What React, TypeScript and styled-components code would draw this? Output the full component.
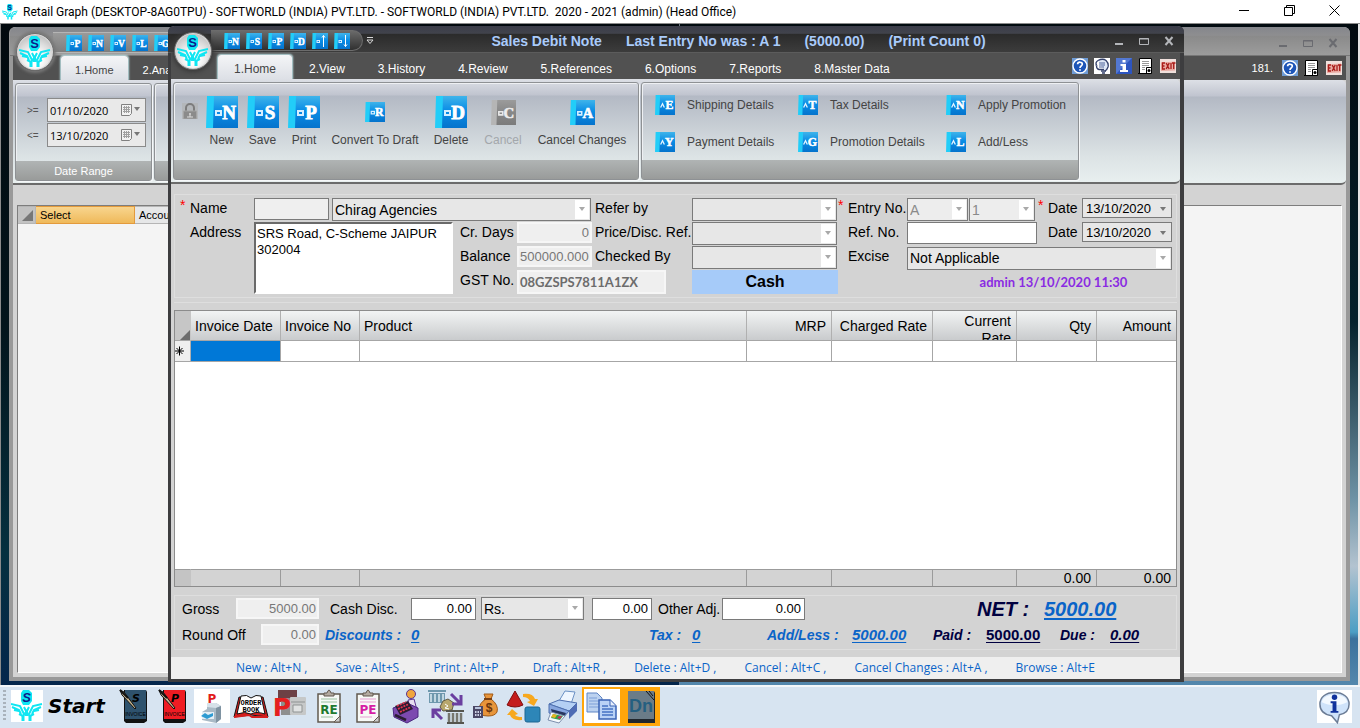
import React, { useId } from "react";
import styled, { createGlobalStyle, css } from "styled-components";

const SANS = '"Liberation Sans", Arial, sans-serif';
const UI = '"Open Sans", "Noto Sans", sans-serif';

const GlobalStyle = createGlobalStyle`
  *, *::before, *::after { box-sizing: border-box; }
  body { margin: 0; font-family: ${SANS}; color: #000; }
  button, input, select, textarea { font-family: inherit; margin: 0; border-radius: 0; }
  button { cursor: pointer; }
`;

/* ---------- page frame ---------- */

const Page = styled.div`
  display: flex;
  flex-direction: column;
  min-height: 100vh;
  background: #d7e4f1;
`;

const AppTitle = styled.header`
  display: flex;
  align-items: center;
  height: 24px;
  background: #fff;
  border-bottom: 1px solid #8a8a8a;
  padding: 0 3px 0 2px;
  font: 12px/22px Roboto, sans-serif;
  white-space: pre;
`;

const AppName = styled.h1`
  margin: 0 auto 0 5px;
  font: inherit;
`;

const SystemButton = styled.button`
  width: 45px;
  height: 22px;
  padding: 0 0 2px;
  border: 0;
  background: none;
  display: grid;
  place-items: center;
`;

const Desktop = styled.main`
  position: relative;
  flex: 1;
  min-height: 560px;
  overflow: hidden;
  border-left: 1px solid #8a8a8a;
  border-right: 2px solid #e4e4e4;
  background:
    linear-gradient(#020b10, #04222c 45%, #6f93a6 72%, #b3c3d0 82%, #4c9ec4 92%, #3b719c 93%, #5488ad) right / 50% 100% no-repeat,
    linear-gradient(#02090e, #03141b 45%, #05303f 80%, #04264c) left / 50% 100% no-repeat;
`;

const Taskbar = styled.footer`
  display: flex;
  align-items: center;
  height: 43px;
  padding: 0 8px 3px 3px;
  background: #d7e4f1;
  border-top: 2px solid #f4f7fa;
`;

/* ---------- child windows ---------- */

const Child = styled.section<{ $back?: boolean }>`
  position: absolute;
  display: flex;
  flex-direction: column;
  border-style: solid;
  border-radius: 6px 6px 0 0;
  background: #d3d3d3;
  ${(p) =>
    p.$back
      ? css`
          inset: 3px 8px 4px 8px;
          border-width: 0 4px 4px;
          border-color: #999;
        `
      : css`
          inset: 2px 174px 3px 167px;
          border-width: 0 4px 3px 3px;
          border-color: #3d3d3f;
        `}
`;

const ChildTitle = styled.header<{ $back?: boolean }>`
  display: flex;
  align-items: center;
  height: ${(p) => (p.$back ? 29 : 27)}px;
  margin: 0 -4px 0 -3px;
  padding: 3px ${(p) => (p.$back ? 12 : 10)}px 0 43px;
  border-radius: 6px 6px 0 0;
  border-bottom: 1px solid ${(p) => (p.$back ? "#777" : "#5c5c5c")};
  background: ${(p) =>
    p.$back
      ? "linear-gradient(#84868c, #8e8e90 30%, #8a8a8a 32%, #9c9c9c)"
      : "linear-gradient(#3b3d49, #41434c 28%, #2b2b2b 32%, #3c3c3c)"};
`;

const QuickBar = styled.nav<{ $back?: boolean }>`
  display: flex;
  gap: 6px;
  height: 21px;
  align-items: center;
  padding: 0 12px 0 13px;
  border-radius: 0 11px 11px 0;
  border: 1px solid ${(p) => (p.$back ? "#b5b5b5" : "#6c6c6c")};
  border-left: 0;
  background: ${(p) => (p.$back ? "linear-gradient(#9a9a9a, #7e7e7e)" : "linear-gradient(#6a6a6a, #303030)")};
`;

const IconButton = styled.button`
  display: block;
  padding: 0;
  border: 0;
  background: none;
  line-height: 0;
`;

const Caption = styled.h2`
  flex: 1;
  display: flex;
  justify-content: center;
  gap: 24px;
  margin: 0;
  padding-right: 14px;
  font: bold 14px/20px ${SANS};
  color: #a9cbfb;
  white-space: nowrap;
`;

const WindowControls = styled.div`
  display: flex;
  gap: 15px;
  margin-left: auto;
`;

const TabBar = styled.nav<{ $back?: boolean }>`
  display: flex;
  align-items: flex-end;
  gap: 1px;
  height: ${(p) => (p.$back ? 24 : 26)}px;
  padding: 0 4px 0 ${(p) => (p.$back ? 48 : 47)}px;
  background: #515151;
`;

const Tab = styled.button<{ $active?: boolean; $small?: boolean }>`
  height: 24px;
  padding: ${(p) => (p.$small ? "2px 14px 0" : "2px 16px 0")};
  border: 0;
  font-size: ${(p) => (p.$small ? 11 : 12)}px;
  line-height: 24px;
  white-space: nowrap;
  color: #fff;
  background: none;
  ${(p) =>
    p.$active &&
    css`
      color: #444;
      border-radius: 3px 3px 0 0;
      background: linear-gradient(#f4f5f7, #dde0e6);
      box-shadow: 0 0 2px 1px #bfe4e8;
    `}
`;

const TabTools = styled.div`
  display: flex;
  align-items: center;
  gap: 6px;
  height: 100%;
  margin-left: auto;
  font-size: 11px;
  color: #fff;
`;

const Ribbon = styled.div`
  position: relative;
  display: flex;
  gap: 2px;
  height: 105px;
  padding: 3px 2px 2px;
  border-radius: 0 5px 5px 0;
  border-bottom: 2px solid #6b6b6b;
  background: linear-gradient(#dde0e6, #c0c4cf 16px, #b3b9c4 17px, #dce3e5 75%, #e8efef);
`;

const Group = styled.section<{ $width: number }>`
  display: flex;
  flex-direction: column;
  width: ${(p) => p.$width}px;
  border: 1px solid #8e9194;
  border-radius: 3px;
  box-shadow: 1px 1px 0 #f6f8f9, inset 1px 1px 0 #eef0f3;
`;

const GroupBody = styled.div`
  flex: 1;
  display: flex;
`;

const GroupCaption = styled.div`
  height: 19px;
  background: linear-gradient(#b0b4b4, #999b9a);
  color: #fff;
  font-size: 11px;
  line-height: 20px;
  text-align: center;
`;

const Command = styled.button<{ $width: number }>`
  width: ${(p) => p.$width}px;
  display: flex;
  flex-direction: column;
  align-items: center;
  padding: 12px 0 0;
  border: 0;
  background: none;
  font-size: 12px;
  line-height: 16px;
  color: #444;
  white-space: nowrap;
  &:disabled { color: #a3a7ab; }
`;

const CommandIcon = styled.span`
  display: grid;
  place-items: center;
  height: 34px;
  margin-bottom: 3px;
`;

const LockSlot = styled.div`
  width: 27px;
  padding: 20px 0 0 8px;
`;

const DetailGrid = styled.div`
  display: grid;
  grid-template-columns: 143px 148px 1fr;
  grid-auto-rows: 37px;
  padding: 3px 0 0 13px;
`;

const Detail = styled.button`
  display: flex;
  align-items: center;
  gap: 12px;
  padding: 0;
  border: 0;
  background: none;
  font-size: 12px;
  color: #444;
  white-space: nowrap;
`;

/* ---------- form parts ---------- */

const Workspace = styled.div`
  flex: 1;
  display: flex;
  flex-direction: column;
  padding: 10px 3px 7px;
`;

const HeaderForm = styled.form`
  display: grid;
  grid-template-columns: 74px 78px minmax(128px, 1fr) 57px 78px 97px 146px 69px 62px 71px 42px 90px;
  grid-template-rows: repeat(4, 24px);
  padding: 3px 5px;
  border: 1px solid #dedede;
`;

const Area = styled.div<{ $col: string; $row: string; $right?: number; $align?: string }>`
  grid-column: ${(p) => p.$col};
  grid-row: ${(p) => p.$row};
  display: flex;
  min-width: 0;
  align-items: ${(p) => p.$align ?? "flex-start"};
  padding-right: ${(p) => p.$right ?? 0}px;
`;

const Label = styled.label<{ $required?: boolean }>`
  position: relative;
  font-size: 14px;
  line-height: 20px;
  white-space: nowrap;
  ${(p) =>
    p.$required &&
    css`
      &::before {
        content: "*";
        position: absolute;
        left: -10px;
        top: -3px;
        color: #f00;
      }
    `}
`;

const LabelArea = styled(Area)`
  padding-left: ${(p) => p.$right ?? 0}px;
  padding-right: 0;
`;

const fieldBase = css`
  width: 100%;
  height: 22px;
  padding: 0 3px;
  font-size: 13px;
  border: 1px solid #7a7a7a;
  outline: 0;
`;

const Field = styled.input<{ $kind?: "plain" | "muted"; $right?: boolean }>`
  ${fieldBase}
  background: #fff;
  text-align: ${(p) => (p.$right ? "right" : "left")};
  ${(p) =>
    p.$kind === "muted" &&
    css`
      height: 21px;
      padding: 0 1px;
      background: #efefef;
      border: 2px solid #f6f6f6;
      color: #777;
    `}
`;

const NameCode = styled(Field)`
  background: #efefef;
`;

const TaxNumber = styled(Field)`
  height: 24px;
  font: bold 13px Lato, sans-serif;
  color: #6c6c6c;
`;

const AddressBox = styled.textarea`
  width: 100%;
  height: 72px;
  padding: 2px 1px;
  font-size: 13px;
  line-height: 16px;
  resize: none;
  border: 2px solid #fff;
  border-top-color: #6a6a6a;
  border-left-color: #6a6a6a;
  background: #fff;
  outline: 0;
`;

const Drop = styled.span<{ $solid?: boolean }>`
  position: relative;
  display: block;
  width: 100%;
  &::before {
    content: "";
    position: absolute;
    right: 2px;
    top: 2px;
    bottom: 2px;
    width: 14px;
    background: ${(p) => (p.$solid ? "none" : "#fff")};
    pointer-events: none;
  }
  &::after {
    content: "";
    position: absolute;
    right: 6px;
    top: 9px;
    border: 3px solid transparent;
    border-top: 4px solid ${(p) => (p.$solid ? "#777" : "#a9a9a9")};
    border-bottom: 0;
    pointer-events: none;
  }
`;

const Select = styled.select`
  ${fieldBase}
  display: block;
  height: 23px;
  padding: 0 2px;
  font-size: 14px;
  appearance: none;
  background: #e7e7e7;
  color: #000;
  opacity: 1;
  &:disabled { background: #ededed; color: #8a8a8a; }
`;

const DateInput = styled.input`
  ${fieldBase}
  display: block;
  height: 20px;
  background: #e7e7e7;
`;

const Mode = styled.output`
  flex: 1;
  height: 24px;
  background: #a6cbf9;
  font: bold 16px/24px ${SANS};
  text-align: center;
`;

const Stamp = styled.p`
  margin: 0;
  width: 100%;
  font: bold 13px/24px Lato, sans-serif;
  color: #8a2be2;
  padding-left: 28px;
  text-align: center;
  white-space: nowrap;
`;

/* ---------- line items ---------- */

const Sheet = styled.div`
  flex: 1;
  display: grid;
  margin-top: 4px;
  padding: 7px 0 0;
  border-top: 1px solid #dedede;
`;

const Lines = styled.table`
  width: 100%;
  height: 100%;
  min-height: 200px;
  table-layout: fixed;
  border-spacing: 0;
  border: 1px solid #8c8c8c;
  background: #fff;
  font-size: 14px;
  tr > :last-child { border-right: 0; }
`;

const HeadCell = styled.th<{ $right?: boolean }>`
  height: 30px;
  padding: 0 5px 0 4px;
  font-weight: normal;
  text-align: ${(p) => (p.$right ? "right" : "left")};
  white-space: nowrap;
  border-right: 1px solid #b0b0b0;
  border-bottom: 1px solid #a6a6a6;
  background: linear-gradient(#f2f4f4, #c9cbcd);
`;

const TwoLine = styled.div`
  height: 28px;
  padding-top: 1px;
  line-height: 17px;
  overflow: hidden;
  white-space: normal;
`;

const Corner = styled.th`
  padding: 0;
  vertical-align: bottom;
  background: #c6c6c6;
  border-bottom: 1px solid #a6a6a6;
  border-right: 1px solid #c6c6c6;
  &::after {
    content: "";
    display: block;
    margin-left: auto;
    width: 0;
    border-left: 10px solid transparent;
    border-bottom: 10px solid #6d6d6d;
  }
`;

const RowMark = styled.th`
  height: 21px;
  padding: 0;
  background: #efefef;
  border-right: 1px solid #b0b0b0;
  border-bottom: 1px solid #a6a6a6;
  text-align: left;
  svg { display: block; }
`;

const Cell = styled.td<{ $active?: boolean }>`
  height: 21px;
  padding: 0;
  border-right: 1px solid #a6a6a6;
  border-bottom: 1px solid #a6a6a6;
  background: ${(p) => (p.$active ? "#0078d7" : "#fff")};
`;

const FootCell = styled.td<{ $mark?: boolean }>`
  height: 17px;
  padding: 1px 5px 0;
  line-height: 15px;
  text-align: right;
  background: ${(p) => (p.$mark ? "#c4c4c4" : "#d3d3d3")};
  border-top: 1px solid #9b9b9b;
  border-right: 1px solid ${(p) => (p.$mark ? "#c4c4c4" : "#9b9b9b")};
`;

/* ---------- totals ---------- */

const Totals = styled.section`
  display: flex;
  flex-direction: column;
  gap: 3px;
  margin-top: 8px;
  padding: 1px 5px 3px 7px;
  border: 1px solid #dedede;
`;

const TotalsRow = styled.div`
  display: flex;
  align-items: center;
  height: 23px;
`;

const Slot = styled.div<{ $w?: number; $gap?: number }>`
  ${(p) => (p.$w ? `width: ${p.$w}px;` : "flex: 1;")}
  margin-right: ${(p) => p.$gap ?? 0}px;
  white-space: nowrap;
`;

const Figure = styled.span<{ $navy?: boolean; $big?: boolean }>`
  font: italic bold ${(p) => (p.$big ? 20 : 14)}px/22px ${SANS};
  color: ${(p) => (p.$navy ? "#000040" : "#0a64c8")};
`;

const FigureLink = styled.a<{ $navy?: boolean; $big?: boolean; $upright?: boolean }>`
  font: ${(p) => (p.$upright ? "normal" : "italic")} bold ${(p) => (p.$big ? 20 : 15)}px/22px ${SANS};
  color: ${(p) => (p.$navy ? "#000040" : "#0a64c8")};
  text-decoration: underline;
  text-underline-offset: 2px;
`;

const HotKeys = styled.footer`
  display: flex;
  justify-content: center;
  gap: 28px;
  height: 22px;
  padding-right: 20px;
  background: #efefef;
  font: 12px/22px ${UI};
  color: #0a64c8;
  white-space: nowrap;
`;

/* ---------- back window parts ---------- */

const DateRange = styled.div`
  display: grid;
  grid-template-columns: 31px 99px;
  grid-auto-rows: 24px;
  gap: 1px 0;
  align-content: start;
  padding-top: 14px;
`;

const RangeLabel = styled.label`
  padding-left: 11px;
  font-size: 10px;
  line-height: 26px;
  color: #555;
`;

const RangeInput = styled.input`
  ${fieldBase}
  display: block;
  height: 24px;
  padding: 0 2px;
  font: 11px ${UI};
  background: #e9e9e9;
  border-color: #8a8a8a;
`;

const Picker = styled(Drop)`
  svg { position: absolute; right: 14px; top: 6px; }
`;

const Listing = styled.div`
  flex: 1;
  margin: 20px 4px 4px;
  border: 1px solid #7d7d7d;
  border-right-color: #fff;
  border-bottom-color: #fff;
  background: #f4f4f4;
`;

const ListTable = styled.table`
  border-spacing: 0;
  font-size: 11px;
`;

const ListHead = styled.th<{ $selected?: boolean; $w: number }>`
  width: ${(p) => p.$w}px;
  height: 18px;
  padding: 0 4px;
  font-weight: normal;
  text-align: left;
  background: ${(p) => (p.$selected ? "linear-gradient(#f8d58e, #efb95a)" : "#e6e7e8")};
  border: 1px solid ${(p) => (p.$selected ? "#e39a3c" : "#b5b5b5")};
  border-left-width: 0;
`;

const ListCorner = styled(ListHead)`
  padding: 0;
  background: #c2c2c2;
  &::after {
    content: "";
    display: block;
    margin-left: auto;
    margin-right: 2px;
    width: 0;
    border-left: 11px solid transparent;
    border-bottom: 11px solid #777;
  }
`;

/* ---------- taskbar parts ---------- */

const Grip = styled.span`
  width: 3px;
  height: 32px;
  margin-right: 5px;
  background: repeating-linear-gradient(#a9b2bc 0 2px, transparent 2px 4px);
`;

const StartButton = styled.button`
  display: flex;
  align-items: center;
  gap: 5px;
  width: 103px;
  padding: 0;
  border: 0;
  background: none;
  font: italic bold 20px/32px "DejaVu Sans", Verdana, sans-serif;
`;

const LogoTile = styled.span`
  display: block;
  width: 32px;
  height: 32px;
  background: #fff;
`;

const TaskButton = styled.button<{ $on?: boolean }>`
  display: grid;
  place-items: center;
  width: 39px;
  height: 39px;
  padding: 0;
  border: 0;
  background: ${(p) => (p.$on ? "#ffa60a" : "none")};
`;

const InfoButton = styled(TaskButton)`
  margin-left: auto;
  width: 35px;
  height: 33px;
  background: #fff;
`;

/* ---------- drawings ---------- */

function Emblem({ size }: { size: number }) {
  return (
    <svg width={size} height={size} viewBox="0 0 32 32" aria-hidden="true" style={{ display: "block" }}>
      <path d="M12 0h6l3 3v8l-3 4h-6l-2-4V3z" fill="#0fe6f2" />
      <text x="15.500" y="12" fontFamily="Liberation Sans" fontWeight="bold" fontSize="13" textAnchor="middle" fill="#0b1d8c">S</text>
      <path d="M0 14l9 2 4 8M1 17l7 3 2 4M3 20l5 1M31 14l-9 2-4 8M30 17l-7 3-2 4M28 20l-5 1" stroke="#0fe6f2" strokeWidth="2" fill="none" />
      <path d="M13 17l2.500 5 2.500-5M8 24l4 2 3-4 4 4 4-2" stroke="#0fe6f2" strokeWidth="2" fill="none" />
      <path d="M12 25v6M19 25v6M15.500 21v5" stroke="#0fe6f2" strokeWidth="3" />
    </svg>
  );
}

const OrbButton = styled.button`
  position: absolute;
  left: 3px;
  top: 6px;
  width: 38px;
  height: 38px;
  padding: 0;
  display: grid;
  place-items: center;
  border: 1px solid #6e6e6e;
  border-radius: 50%;
  background: radial-gradient(circle at 50% 70%, #fff 20%, #dcdcdc 55%, #a8a8a8);
  box-shadow: 0 0 0 1px #d9d9d9 inset, 0 0 4px 2px #3a3a3a;
  &[data-theme="light"] { box-shadow: 0 0 0 1px #d9d9d9 inset, 0 0 3px 2px #777; }
`;

function KeyIcon({ letter, size, mark = "box", gray }: { letter: string; size: number; mark?: "box" | "caret"; gray?: boolean }) {
  const id = useId();
  return (
    <svg width={size} height={size} viewBox="0 0 32 32" aria-hidden="true" style={{ display: "block" }}>
      <defs>
        <linearGradient id={id} x1="0" y1="0" x2="0" y2="1">
          <stop offset="0" stopColor={gray ? "#9b9b9b" : "#3fb4ea"} />
          <stop offset="0.45" stopColor={gray ? "#898989" : "#0a8de6"} />
          <stop offset="1" stopColor={gray ? "#7b7b7b" : "#0573cc"} />
        </linearGradient>
      </defs>
      <path d="M7 0h25v32H6z" fill={`url(#${id})`} />
      <path d="M1 0h7L7 32H0z" fill={gray ? "#b5b5b5" : "#22cdf8"} />
      {mark === "box" ? (
        <path d="M9 14h7v6H9zM11 16v2h3v-2z" fill={gray ? "#e8e8e8" : "#d7efff"} fillRule="evenodd" />
      ) : (
        <path d="M9 20l3-6 3 6" fill="none" stroke="#e6f6ff" strokeWidth="2" />
      )}
      {letter === "^" || letter === "v" ? (
        <path d={letter === "^" ? "M23 28V5M20 9l3-4 3 4" : "M23 4v23M20 23l3 4 3-4"} stroke="#fff" strokeWidth="2" fill="none" />
      ) : (
        <text
          x="23"
          y="23"
          fontFamily="Liberation Serif"
          fontWeight="bold"
          fontSize="19"
          textAnchor="middle"
          fill={gray ? "#ececec" : "#fff"}
          stroke={gray ? "#ececec" : "#fff"}
          strokeWidth="0.800"
        >
          {letter}
        </text>
      )}
    </svg>
  );
}

const Glyph16 = ({ children }: { children: React.ReactNode }) => (
  <svg width="16" height="16" viewBox="0 0 16 16" aria-hidden="true">{children}</svg>
);

const HelpIcon = () => (
  <Glyph16>
    <rect width="16" height="16" fill="#6f9cd6" />
    <circle cx="8" cy="8" r="7" fill="#1d55b8" stroke="#fff" strokeWidth="1.4" />
    <path d="M5.6 6.2C5.8 3.5 10.5 3.6 10.3 6.3 10.2 7.8 8 8 8 10M8 11.2v1.6" stroke="#fff" strokeWidth="1.7" fill="none" />
  </Glyph16>
);

const ScrollIcon = () => (
  <Glyph16>
    <rect width="16" height="16" fill="#fff" />
    <path d="M4 2.500q5-2.500 8 0 3 3 2 6.500-1 3-3 4" fill="#dfe8f7" stroke="#33406b" strokeWidth="1.300" />
    <path d="M4 2.500q-3 2-1.500 4.500h-1M2.500 8q0 3 2.500 3.500h5" fill="none" stroke="#33406b" strokeWidth="1.300" />
    <path d="M5 5h6M5 7h6M5 9h5" stroke="#4d6299" />
    <path d="M7 13h5M8 15h3" stroke="#33406b" strokeWidth="1.400" />
  </Glyph16>
);

const InfoSquare = () => (
  <Glyph16>
    <rect width="16" height="16" fill="#2d55c0" />
    <path d="M0 0h16L0 16z" fill="#6c90de" opacity="0.6" />
    <path d="M6.500 2h3v2.500h-3zM4.500 6H10v6h2v2H4v-2h2.500V8h-2z" fill="#fff" />
  </Glyph16>
);

const PageIcon = () => (
  <Glyph16>
    <path d="M1.500.5h12v15h-12z" fill="#fff" stroke="#000" />
    <path d="M4 3.500h7M4 5.500h7M4 7.500h7M4 9.500h3M4 11.500h3" stroke="#999" />
    <path d="M8.500 9.500h5v6h-5z" fill="#fff" stroke="#000" />
    <circle cx="11" cy="12.500" r="1.500" fill="#000" />
    <path d="M0 15.500h9" stroke="#000" fill="none" />
  </Glyph16>
);

const ExitIcon = () => (
  <Glyph16>
    <rect y="1" width="16" height="14" fill="#f0e0dc" />
    <path d="M1 4.500l14-1v9l-14 .5z" fill="#e9aaa2" />
    <path d="M5 5H2.500v6H5M2.500 8h2M6.200 5l3 6M9.200 5l-3 6M11 5v6M12 5h3.500M13.700 5v6" stroke="#a91d1a" strokeWidth="1.300" fill="none" />
  </Glyph16>
);

const LockIcon = () => (
  <Glyph16>
    <rect width="16" height="16" fill="#b4b7ba" />
    <path d="M4 8V5a4 4 0 018 0v3" fill="none" stroke="#7c7c7c" strokeWidth="2" />
    <path d="M1.500 8h13v8h-13z" fill="#8b8b8b" stroke="#a4a4a4" />
    <path d="M8 10v4M7 11h2M5 14h6" stroke="#dcdcdc" />
  </Glyph16>
);

const CalendarIcon = () => (
  <svg width="11" height="12" viewBox="0 0 11 12" aria-hidden="true">
    <path d="M.5.5h10v9l-2 2h-8z" fill="#f2f2f2" stroke="#808080" />
    <path d="M2 3.500h7M2 5.500h7M2 7.500h7M3.500 2v7M5.500 2v7M7.500 2v7" stroke="#a0a0a0" />
  </svg>
);

function ControlSet({ color }: { color: string }) {
  return (
    <WindowControls>
      <IconButton aria-label="Minimize window">
        <svg width="10" height="10"><path d="M1 8h8" stroke={color} strokeWidth="2" /></svg>
      </IconButton>
      <IconButton aria-label="Maximize window">
        <svg width="10" height="10"><path d="M.5 2.500h9v6h-9zM0 3h10" stroke={color} fill="none" strokeWidth="1" /></svg>
      </IconButton>
      <IconButton aria-label="Close window">
        <svg width="10" height="10"><path d="M1.500 1l7 8M8.500 1l-7 8" stroke={color} strokeWidth="2" /></svg>
      </IconButton>
    </WindowControls>
  );
}

const Art = ({ children, w = 36 }: { children: React.ReactNode; w?: number }) => (
  <svg width={w} height="36" viewBox="0 0 36 36" aria-hidden="true">{children}</svg>
);

const InvoiceArt = ({ letter, fill, ink }: { letter: string; fill: string; ink: string }) => (
  <Art>
    <path d="M8 2h22l1 2v29l-3 2H10l-2-2z" fill="#111" />
    <path d="M9 2h21v29H9z" fill={fill} />
    <text x="20" y="14" fontFamily="DejaVu Sans" fontWeight="bold" fontStyle="italic" fontSize="11" textAnchor="middle" fill={ink}>{letter}</text>
    <text x="19.500" y="28" fontFamily="Liberation Sans" fontSize="5" textAnchor="middle" fill={ink}>INVOICE</text>
    <path d="M4 2l4 2 12 16-1 1L6 7z" fill="#c9b68f" stroke="#111" />
    <path d="M4 2l8 8" stroke="#111" strokeWidth="2" />
  </Art>
);

const PrinterPArt = () => (
  <Art>
    <rect x="0" y="1" width="36" height="34" fill="#fff" />
    <text x="18" y="15" fontFamily="DejaVu Sans" fontWeight="bold" fontSize="12" textAnchor="middle" fill="#e21b1b">P</text>
    <path d="M13 15h9l5 3v13l-5 4-14-3V24l5-3z" fill="#a9bac6" />
    <path d="M13 15h9l5 3-5 2-9-1z" fill="#d6e1e9" />
    <path d="M22 20l5-2v13l-5 4z" fill="#7f93a2" />
    <path d="M8 24h12v7H8z" fill="#e4eef5" />
    <path d="M7 28l4-3 3 2 5-2v3l-6 3z" fill="#2d9bd2" />
  </Art>
);

const OrderBookArt = () => (
  <Art>
    <path d="M1 29L6 9l12 2 12-2 5 20-17-2z" fill="#d51f1f" stroke="#111" />
    <path d="M4 26L8 8q6-2 10 2 5-4 10-2l4 18q-9-3-14 0-6-3-14 0z" fill="#fff" stroke="#111" />
    <text x="18" y="17" fontFamily="Liberation Mono" fontWeight="bold" fontSize="7" textAnchor="middle">ORDER</text>
    <text x="18" y="24" fontFamily="Liberation Mono" fontWeight="bold" fontSize="7" textAnchor="middle">BOOK</text>
    <path d="M1 29l15-2 3 2 16 0" stroke="#d51f1f" strokeWidth="2" fill="none" />
  </Art>
);

const FilesArt = () => (
  <Art>
    <rect x="6" y="2" width="19" height="12" fill="#6d4145" />
    <rect x="9" y="10" width="10" height="17" fill="#8f8f8f" />
    <rect x="18" y="9" width="16" height="18" rx="1" fill="#c6c8c8" />
    <path d="M19 14h14M21 17h9v7h-9z" stroke="#8f9393" fill="#e0e2e2" />
    <text x="10" y="28" fontFamily="DejaVu Sans" fontWeight="bold" fontSize="25" textAnchor="middle" fill="#e51f1f">P</text>
  </Art>
);

const ClipArt = ({ text, ink }: { text: string; ink: string }) => (
  <Art>
    <path d="M7 6h22v28H7z" fill="#f7f9f6" stroke="#62594f" strokeWidth="1.500" />
    <path d="M13 8V5h3q2-6 4 0h3v3z" fill="#b3aaa0" stroke="#62594f" />
    <path d="M10 11h16M10 14h16M10 29h12" stroke={ink} strokeWidth="0.700" opacity="0.600" />
    <path d="M23 34l6-6v6z" fill="#ccc" stroke="#62594f" />
    <text x="18" y="26" fontFamily="DejaVu Sans" fontWeight="bold" fontSize="12" textAnchor="middle" fill={ink}>{text}</text>
  </Art>
);

const CashierArt = () => (
  <Art>
    <circle cx="22" cy="6" r="4.500" fill="#f0a53c" stroke="#5d3390" />
    <path d="M19 12l6-1 3 11-6 2z" fill="#e7dff0" stroke="#5d3390" />
    <path d="M4 20l14-5 11 5v9l-11 6-13-6z" fill="#7c4ab0" stroke="#4a2680" />
    <path d="M6 18l13-5 5 8-13 6z" fill="#2a1d33" />
    <path d="M8 18l9-4M9 21l11-5M11 24l11-5" stroke="#e3354f" strokeWidth="1.800" strokeDasharray="2 1" />
    <path d="M6 27l11 5" stroke="#2a1d33" strokeWidth="2.500" />
  </Art>
);

const BankArt = () => (
  <Art>
    <path d="M0 2h18v2H0zM1 5h16v10H1z" fill="#6e98ad" />
    <path d="M3 6v8M7 6v8M11 6v8M15 6v8" stroke="#dcecf2" strokeWidth="1.500" />
    <path d="M15 13l5-2 6 4-2 7-9 1-3-4z" fill="#b8a76d" stroke="#5f5940" />
    <path d="M17 16l3 2-3 2 4 1" stroke="#fff" fill="none" />
    <path d="M23 6l9 9M33 7v9h-9" stroke="#6b3fa0" strokeWidth="3" fill="none" />
    <path d="M14 31l-8-8M5 30v-8h8" stroke="#6b3fa0" strokeWidth="3" fill="none" />
    <path d="M18 22h18v2H18zM19 34h17v2H19z" fill="#55554f" />
    <path d="M21 25v9M25 25v9M29 25v9M33 25v9" stroke="#77776f" strokeWidth="2.500" />
  </Art>
);

const MoneyArt = () => (
  <Art>
    <path d="M17 6h9l-2 5q8 6 6 13-2 4-9 4-9 0-9-6 0-7 7-11z" fill="#e8953b" stroke="#a05a16" />
    <path d="M17 11h8" stroke="#7a3f10" strokeWidth="2" />
    <text x="22" y="24" fontFamily="Liberation Sans" fontWeight="bold" fontSize="12" textAnchor="middle" fill="#6b350c">$</text>
    <rect x="6" y="18" width="10" height="12" fill="#4c4866" />
    <path d="M8 19h6v2H8z" fill="#b9c4dd" />
    <path d="M8 24h6M8 27h6" stroke="#cfd3e6" strokeWidth="2" strokeDasharray="1.500 1" />
  </Art>
);

const ShapesArt = () => (
  <Art>
    <path d="M9 3l8 14q-8 4-16 0z" fill="#c41c1c" stroke="#7e0e0e" />
    <path d="M17 6q10-1 12 5h3l-4 7-7-4 3-1q-2-4-7-4z" fill="#f7a81e" />
    <rect x="19" y="19" width="15" height="15" rx="2" fill="#2d86b8" stroke="#1c6792" />
    <path d="M16 32q-10 1-12-5H1l5-6 6 5-3 1q2 2 7 2z" fill="#f7a81e" />
  </Art>
);

const PrinterArt = () => (
  <Art>
    <path d="M14 13L20 3l10 1-4 12z" fill="#eef6ff" stroke="#6b91c5" />
    <path d="M4 16l10-4 18 3-8 8z" fill="#b4d0f4" stroke="#4d6fae" />
    <path d="M4 16v9l14 5 6-7z" fill="#86a6df" stroke="#4d6fae" />
    <path d="M24 23l8-8v8l-8 8z" fill="#4f6cb4" />
    <path d="M6 21l15 4-2 4-12-4z" fill="#27365f" />
    <path d="M6 24l14 4-6 7-11-3z" fill="#f7fafc" stroke="#7d8fae" />
    <path d="M8 26l10 2-3 4-9-2z" fill="#31a350" />
    <path d="M8 26l4 1-2 3-4-1z" fill="#e8b21f" />
    <path d="M14 28h3l-2 3-3-1z" fill="#c4325b" />
  </Art>
);

const CopyArt = () => (
  <Art>
    <rect y="1" width="36" height="34" fill="#fff" />
    <path d="M3 5h10l5 5v14H3z" fill="#bcd2f0" stroke="#5f85c4" />
    <path d="M5 10h8M5 13h11M5 16h11M5 19h11" stroke="#7d9fd8" />
    <path d="M15 12h11l6 6v13H15z" fill="#b9d2f6" stroke="#3a63b5" strokeWidth="1.500" />
    <path d="M26 12v6h6" fill="#e8f0fc" stroke="#3a63b5" />
    <path d="M18 18h6M18 21h11M18 24h11M18 27h11" stroke="#4573c4" strokeWidth="1.500" />
  </Art>
);

const DebitNoteArt = () => (
  <Art>
    <path d="M5 3h26l1 2v30H5z" fill="#20262c" />
    <path d="M5 3h26v28H5z" fill="#6b7c88" />
    <text x="18" y="24" fontFamily="Liberation Sans" fontWeight="bold" fontSize="18" textAnchor="middle" fill="#255f80">Dn</text>
    <path d="M23 3l8 9M26 3l4 5" stroke="#111" />
  </Art>
);

const InfoBalloon = () => (
  <Art w={35}>
    <path d="M18 2c9 0 15 5 15 12 0 6-4 10-10 11l-2 8-6-7C8 25 3 21 3 14 3 7 9 2 18 2z" fill="#cfe3fa" stroke="#6b7c95" strokeWidth="1.500" />
    <path d="M18 4c8 0 13 4 13 8-8 4-18 4-26 0 0-4 5-8 13-8z" fill="#f3f9ff" />
    <circle cx="18" cy="7" r="2.800" fill="#10329c" />
    <path d="M14 11h6v10h2v2h-8v-2h2v-8h-2z" fill="#10329c" />
  </Art>
);

/* ---------- data ---------- */

const COLUMNS = [
  { name: "Invoice Date", width: 90 },
  { name: "Invoice No", width: 79 },
  { name: "Product" },
  { name: "MRP", width: 85, right: true },
  { name: "Charged Rate", width: 101, right: true },
  { name: "Current Rate", width: 84, right: true, wrap: true },
  { name: "Qty", width: 80, right: true, total: "0.00" },
  { name: "Amount", width: 79, right: true, total: "0.00" },
];

const COMMANDS = [
  { label: "New", letter: "N", width: 41, size: 32 },
  { label: "Save", letter: "S", width: 41, size: 32 },
  { label: "Print", letter: "P", width: 42, size: 32 },
  { label: "Convert To Draft", letter: "R", width: 100, size: 20 },
  { label: "Delete", letter: "D", width: 52, size: 32 },
  { label: "Cancel", letter: "C", width: 52, size: 25, off: true },
  { label: "Cancel Changes", letter: "A", width: 106, size: 25 },
];

const DETAILS = [
  ["E", "Shipping Details"], ["T", "Tax Details"], ["N", "Apply Promotion"],
  ["Y", "Payment Details"], ["G", "Promotion Details"], ["L", "Add/Less"],
];

const TABS = ["1.Home", "2.View", "3.History", "4.Review", "5.References", "6.Options", "7.Reports", "8.Master Data"];

const KEYS = ["New : Alt+N ,", "Save : Alt+S ,", "Print : Alt+P ,", "Draft : Alt+R ,", "Delete : Alt+D ,", "Cancel : Alt+C ,", "Cancel Changes : Alt+A ,", "Browse : Alt+E"];

const TASKS: [string, React.ReactNode, boolean?][] = [
  ["Sales invoice", <InvoiceArt letter="S" fill="#2e526d" ink="#000" />],
  ["Purchase invoice", <InvoiceArt letter="P" fill="#ef1c23" ink="#000" />],
  ["Purchase print", <PrinterPArt />],
  ["Order book", <OrderBookArt />],
  ["Purchase files", <FilesArt />],
  ["Receipt entry", <ClipArt text="RE" ink="#1f7a2e" />],
  ["Payment entry", <ClipArt text="PE" ink="#d61fa5" />],
  ["Cashier", <CashierArt />],
  ["Bank transfer", <BankArt />],
  ["Cash", <MoneyArt />],
  ["Exchange", <ShapesArt />],
  ["Printer", <PrinterArt />],
  ["Documents", <CopyArt />, true],
  ["Debit note", <DebitNoteArt />, true],
];

/* ---------- windows ---------- */

function RegisterWindow() {
  return (
    <Child $back aria-label="Register">
      <ChildTitle $back>
        <QuickBar $back>
          {["P", "N", "V", "L", "G"].map((k) => (
            <IconButton key={k} aria-label={k}><KeyIcon letter={k} size={16} /></IconButton>
          ))}
        </QuickBar>
        <ControlSet color="#6a6b70" />
      </ChildTitle>
      <OrbButton data-theme="light" aria-label="Register menu"><Emblem size={32} /></OrbButton>
      <TabBar $back>
        <Tab $active $small>1.Home</Tab>
        <Tab $small>2.Analysis</Tab>
        <TabTools>
          <span>181.&nbsp;</span>
          <IconButton aria-label="Help"><HelpIcon /></IconButton>
          <IconButton aria-label="Page"><PageIcon /></IconButton>
          <IconButton aria-label="Exit"><ExitIcon /></IconButton>
        </TabTools>
      </TabBar>
      <Ribbon>
        <Group $width={137}>
          <GroupBody>
            <DateRange>
              <RangeLabel htmlFor="from">&gt;=</RangeLabel>
              <Picker $solid><RangeInput id="from" defaultValue="01/10/2020" /><CalendarIcon /></Picker>
              <RangeLabel htmlFor="to">&lt;=</RangeLabel>
              <Picker $solid><RangeInput id="to" defaultValue="13/10/2020" /><CalendarIcon /></Picker>
            </DateRange>
          </GroupBody>
          <GroupCaption>Date Range</GroupCaption>
        </Group>
        <Group $width={200}>
          <GroupBody>
            <DetailGrid>
              <Detail aria-label="Refresh"><KeyIcon letter="R" size={16} /></Detail>
            </DetailGrid>
          </GroupBody>
          <GroupCaption />
        </Group>
      </Ribbon>
      <Listing>
        <ListTable>
          <thead>
            <tr>
              <ListCorner $w={18} aria-label="All rows" />
              <ListHead $w={99} $selected>Select</ListHead>
              <ListHead $w={120}>Account</ListHead>
            </tr>
          </thead>
        </ListTable>
      </Listing>
    </Child>
  );
}

function DebitNoteForm() {
  return (
    <HeaderForm>
      <LabelArea $col="1" $row="1" $right={10}><Label $required htmlFor="code">Name</Label></LabelArea>
      <Area $col="2" $row="1" $right={3}><NameCode id="code" /></Area>
      <Area $col="3 / 6" $row="1" $right={4}>
        <Drop><Select aria-label="Party"><option>Chirag Agencies</option></Select></Drop>
      </Area>
      <LabelArea $col="1" $row="2" $right={10}><Label htmlFor="address">Address</Label></LabelArea>
      <Area $col="2 / 4" $row="2 / 5" $right={7}>
        <AddressBox id="address" defaultValue="SRS Road, C-Scheme JAIPUR 302004" />
      </Area>
      <Area $col="4" $row="2"><Label htmlFor="crdays">Cr. Days</Label></Area>
      <Area $col="5" $row="2" $right={3}><Field id="crdays" $kind="muted" $right readOnly value="0" /></Area>
      <Area $col="4" $row="3"><Label htmlFor="balance">Balance</Label></Area>
      <Area $col="5" $row="3" $right={3}><Field id="balance" $kind="muted" readOnly value="500000.0000" /></Area>
      <Area $col="4" $row="4"><Label htmlFor="gst">GST No.</Label></Area>
      <Area $col="5 / 7" $row="4" $right={26}><TaxNumber id="gst" $kind="muted" readOnly value="08GZSPS7811A1ZX" /></Area>

      <Area $col="6" $row="1"><Label htmlFor="refer">Refer by</Label></Area>
      <Area $col="7" $row="1" $right={1}><Drop><Select id="refer"><option /></Select></Drop></Area>
      <Area $col="6" $row="2"><Label htmlFor="price">Price/Disc. Ref.</Label></Area>
      <Area $col="7" $row="2" $right={1}><Drop><Select id="price"><option /></Select></Drop></Area>
      <Area $col="6" $row="3"><Label htmlFor="checked">Checked By</Label></Area>
      <Area $col="7" $row="3" $right={1}><Drop><Select id="checked"><option /></Select></Drop></Area>
      <Area $col="7" $row="4"><Mode>Cash</Mode></Area>

      <LabelArea $col="8" $row="1" $right={10}><Label $required htmlFor="series">Entry No.</Label></LabelArea>
      <Area $col="9" $row="1" $right={1}><Drop><Select id="series" disabled><option>A</option></Select></Drop></Area>
      <Area $col="10" $row="1" $right={5}><Drop><Select aria-label="Number" disabled><option>1</option></Select></Drop></Area>
      <LabelArea $col="11" $row="1" $right={8}><Label $required htmlFor="date">Date</Label></LabelArea>
      <Area $col="12" $row="1"><Drop $solid><DateInput id="date" defaultValue="13/10/2020" /></Drop></Area>
      <LabelArea $col="8" $row="2" $right={10}><Label htmlFor="refno">Ref. No.</Label></LabelArea>
      <Area $col="9 / 11" $row="2" $right={3}><Field id="refno" /></Area>
      <LabelArea $col="11" $row="2" $right={8}><Label htmlFor="refdate">Date</Label></LabelArea>
      <Area $col="12" $row="2"><Drop $solid><DateInput id="refdate" defaultValue="13/10/2020" /></Drop></Area>
      <LabelArea $col="8" $row="3" $right={10}><Label htmlFor="excise">Excise</Label></LabelArea>
      <Area $col="9 / 13" $row="3" $align="center"><Drop><Select id="excise"><option>Not Applicable</option></Select></Drop></Area>
      <Area $col="9 / 13" $row="4"><Stamp>admin 13/10/2020 11:30</Stamp></Area>
    </HeaderForm>
  );
}

function LineItems() {
  return (
    <Sheet>
      <Lines>
        <colgroup>
          <col width={16} />
          {COLUMNS.map((c) => <col key={c.name} width={c.width} />)}
        </colgroup>
        <thead>
          <tr>
            <Corner aria-label="All rows" />
            {COLUMNS.map((c) => (
              <HeadCell key={c.name} $right={c.right}>{c.wrap ? <TwoLine>{c.name}</TwoLine> : c.name}</HeadCell>
            ))}
          </tr>
        </thead>
        <tbody>
          <tr>
            <RowMark aria-label="New row">
              <svg width="10" height="10" viewBox="0 0 10 10" aria-hidden="true">
                <path d="M4.500.5v9M0 5h9M1.500 2l6 6M7.500 2l-6 6" stroke="#000" />
              </svg>
            </RowMark>
            {COLUMNS.map((c, i) => <Cell key={c.name} $active={i === 0} />)}
          </tr>
          <tr><td colSpan={9} /></tr>
        </tbody>
        <tfoot>
          <tr>
            <FootCell $mark />
            {COLUMNS.map((c) => <FootCell key={c.name}>{c.total}</FootCell>)}
          </tr>
        </tfoot>
      </Lines>
    </Sheet>
  );
}

function TotalsPanel() {
  return (
    <Totals>
      <TotalsRow>
        <Slot $w={54}><Label htmlFor="gross">Gross</Label></Slot>
        <Slot $w={83} $gap={11}><Field id="gross" $kind="muted" $right readOnly value="5000.00" /></Slot>
        <Slot $w={81}><Label htmlFor="cashdisc">Cash Disc.</Label></Slot>
        <Slot $w={65} $gap={5}><Field id="cashdisc" $right defaultValue="0.00" /></Slot>
        <Slot $w={103} $gap={8}><Drop><Select aria-label="Discount unit"><option>Rs.</option></Select></Drop></Slot>
        <Slot $w={60} $gap={6}><Field aria-label="Discount amount" $right defaultValue="0.00" /></Slot>
        <Slot $w={64}><Label htmlFor="adj">Other Adj.</Label></Slot>
        <Slot $w={83}><Field id="adj" $right defaultValue="0.00" /></Slot>
        <Slot />
        <Slot $w={67}><Figure $big $navy>NET :</Figure></Slot>
        <Slot $w={127}><FigureLink $big href="#net">5000.00</FigureLink></Slot>
      </TotalsRow>
      <TotalsRow>
        <Slot $w={79}><Label htmlFor="round">Round Off</Label></Slot>
        <Slot $w={58} $gap={6}><Field id="round" $kind="muted" $right readOnly value="0.00" /></Slot>
        <Slot $w={86}><Figure>Discounts :</Figure></Slot>
        <Slot><FigureLink href="#discounts">0</FigureLink></Slot>
        <Slot $w={43}><Figure>Tax :</Figure></Slot>
        <Slot $w={75}><FigureLink href="#tax">0</FigureLink></Slot>
        <Slot $w={85}><Figure>Add/Less :</Figure></Slot>
        <Slot $w={81}><FigureLink href="#addless">5000.00</FigureLink></Slot>
        <Slot $w={53}><Figure $navy>Paid :</Figure></Slot>
        <Slot $w={74}><FigureLink $navy $upright href="#paid">5000.00</FigureLink></Slot>
        <Slot $w={50}><Figure $navy>Due :</Figure></Slot>
        <Slot $w={61}><FigureLink $navy href="#due">0.00</FigureLink></Slot>
      </TotalsRow>
    </Totals>
  );
}

function DebitNoteWindow() {
  return (
    <Child aria-label="Sales Debit Note">
      <ChildTitle>
        <QuickBar>
          {["N", "S", "P", "D", "^", "v"].map((k) => (
            <IconButton key={k} aria-label={k}><KeyIcon letter={k} size={16} /></IconButton>
          ))}
        </QuickBar>
        <svg width="14" height="9" viewBox="-6 0 14 9" aria-hidden="true">
          <path d="M-2 1.500h6M-2 4h6L1 7.500z" stroke="#d8d8d8" fill="none" />
        </svg>
        <Caption>
          <span>Sales Debit Note</span>
          <span>Last Entry No was : A 1</span>
          <span>(5000.00)</span>
          <span>(Print Count 0)</span>
        </Caption>
        <ControlSet color="#b4b6ba" />
      </ChildTitle>
      <OrbButton aria-label="Debit note menu"><Emblem size={32} /></OrbButton>
      <TabBar>
        {TABS.map((t, i) => <Tab key={t} $active={i === 0}>{t}</Tab>)}
        <TabTools>
          <IconButton aria-label="Help"><HelpIcon /></IconButton>
          <IconButton aria-label="History"><ScrollIcon /></IconButton>
          <IconButton aria-label="Information"><InfoSquare /></IconButton>
          <IconButton aria-label="Page"><PageIcon /></IconButton>
          <IconButton aria-label="Exit"><ExitIcon /></IconButton>
        </TabTools>
      </TabBar>
      <Ribbon>
        <Group $width={466}>
          <GroupBody>
            <LockSlot><LockIcon /></LockSlot>
            {COMMANDS.map((c) => (
              <Command key={c.label} $width={c.width} disabled={c.off}>
                <CommandIcon><KeyIcon letter={c.letter} size={c.size} gray={c.off} /></CommandIcon>
                {c.label}
              </Command>
            ))}
          </GroupBody>
          <GroupCaption />
        </Group>
        <Group $width={438}>
          <GroupBody>
            <DetailGrid>
              {DETAILS.map(([k, label]) => (
                <Detail key={k}><KeyIcon letter={k} size={20} mark="caret" />{label}</Detail>
              ))}
            </DetailGrid>
          </GroupBody>
          <GroupCaption />
        </Group>
      </Ribbon>
      <Workspace>
        <DebitNoteForm />
        <LineItems />
        <TotalsPanel />
      </Workspace>
      <HotKeys>{KEYS.map((k) => <span key={k}>{k}</span>)}</HotKeys>
    </Child>
  );
}

export default function App() {
  return (
    <Page>
      <GlobalStyle />
      <AppTitle>
        <Emblem size={16} />
        <AppName>Retail Graph (DESKTOP-8AG0TPU) - SOFTWORLD (INDIA) PVT.LTD. - SOFTWORLD (INDIA) PVT.LTD.  2020 - 2021 (admin) (Head Office)</AppName>
        <SystemButton aria-label="Minimize">
          <svg width="11" height="11"><path d="M0 5.500h10" stroke="#000" /></svg>
        </SystemButton>
        <SystemButton aria-label="Restore">
          <svg width="11" height="11"><path d="M.5 2.500h8v8h-8zM2.500 2.500v-2h8v8h-2" stroke="#000" fill="none" /></svg>
        </SystemButton>
        <SystemButton aria-label="Close">
          <svg width="11" height="11"><path d="M.5.5l10 10M10.500.5l-10 10" stroke="#000" /></svg>
        </SystemButton>
      </AppTitle>
      <Desktop>
        <RegisterWindow />
        <DebitNoteWindow />
      </Desktop>
      <Taskbar>
        <Grip />
        <StartButton><LogoTile><Emblem size={32} /></LogoTile>Start</StartButton>
        {TASKS.map(([name, art, on]) => (
          <TaskButton key={name} aria-label={name} $on={on}>{art}</TaskButton>
        ))}
        <InfoButton aria-label="About"><InfoBalloon /></InfoButton>
      </Taskbar>
    </Page>
  );
}
